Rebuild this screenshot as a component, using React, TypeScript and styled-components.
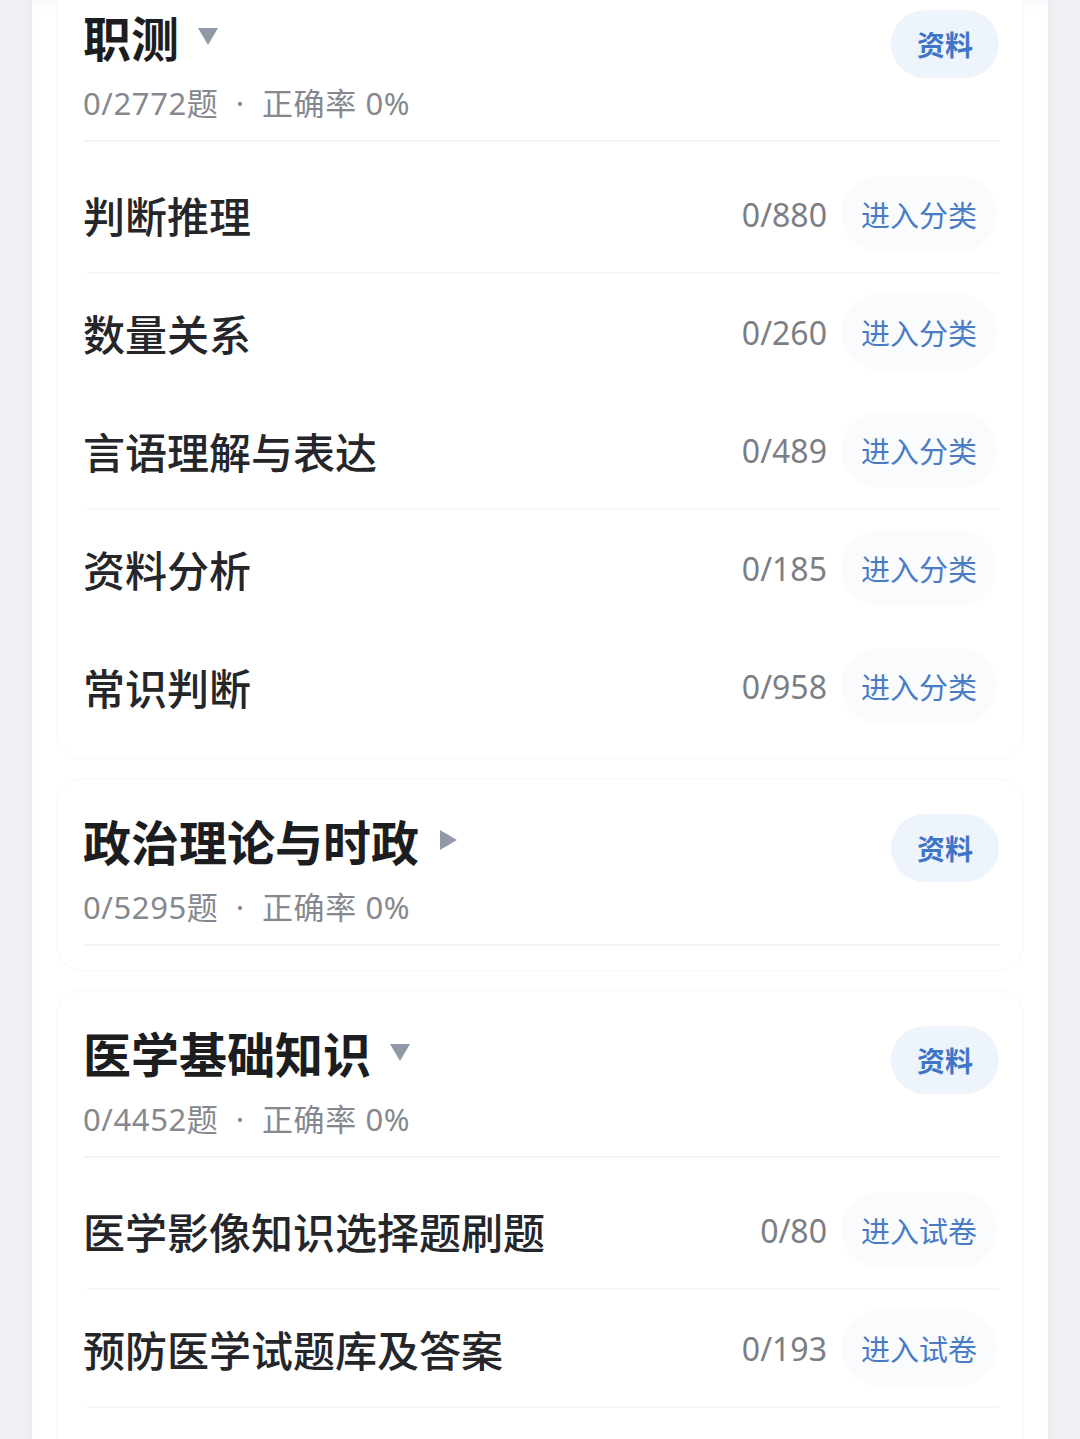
import React from "react"
import styled, { createGlobalStyle } from "styled-components"

const GlobalStyle = createGlobalStyle`
  html, body {
    margin: 0;
    padding: 0;
    background: #eff0f3;
  }
  body {
    font-family: "Noto Sans", "Noto Sans CJK SC", sans-serif;
    overflow: hidden;
  }
`

const Panel = styled.div`
  margin: -26px 32px 0;
  min-height: 1500px;
  background: #ffffff;
  padding: 0 24px 40px;
  display: flex;
  flex-direction: column;
  gap: 19px;
  box-shadow: 0 0 6px rgba(0, 0, 0, 0.04), inset 0 34px 10px -8px rgba(220, 228, 240, 0.5);
`

const Card = styled.section`
  border: 1px solid #f7f8fa;
  border-radius: 26px;
  padding: 0 24px 0 26px;
  background: #fff;
`

const Header = styled.div`
  display: flex;
  justify-content: space-between;
  align-items: flex-start;
  height: 167px;
  border-bottom: 2px solid #f3f4f6;
  box-sizing: border-box;
`

const HeaderText = styled.div`
  display: flex;
  flex-direction: column;
  padding-top: 31px;
`

const TitleRow = styled.div`
  display: flex;
  align-items: center;
  gap: 18px;
`

const Title = styled.h2`
  margin: 0;
  font-size: 48px;
  line-height: 60px;
  font-weight: 700;
  color: #1b1d21;
  font-family: "Noto Sans CJK SC", sans-serif;
`

const Arrow = styled.svg`
  width: 22px;
  height: 22px;
  flex: none;
`

const Stats = styled.div`
  margin-top: 17px;
  font-size: 31px;
  line-height: 40px;
  letter-spacing: 0.6px;
  color: #85888e;
  font-family: "Noto Sans", "Noto Sans CJK SC", sans-serif;
  white-space: pre;
`

const InfoButton = styled.button`
  margin-top: 35px;
  width: 108px;
  height: 68px;
  border: none;
  border-radius: 34px;
  background: #eef4fc;
  color: #3f75c6;
  font-size: 28px;
  font-weight: 700;
  font-family: "Noto Sans CJK SC", sans-serif;
  padding: 0;
`

const List = styled.div<{ $tail: number }>`
  padding-top: 14px;
  padding-bottom: ${(p) => p.$tail}px;
`

const Row = styled.div<{ $line: boolean }>`
  display: flex;
  align-items: center;
  height: 118px;
  box-sizing: border-box;
  border-bottom: 2px solid ${(p) => (p.$line ? "#f5f6f8" : "transparent")};
  margin-left: 4px;
`

const RowTitle = styled.div`
  flex: 1;
  margin-left: -4px;
  font-size: 42px;
  font-weight: 500;
  color: #24262a;
  font-family: "Noto Sans CJK SC", sans-serif;
`

const Count = styled.div`
  font-size: 32px;
  color: #7b7e84;
  font-family: "Noto Sans", sans-serif;
  margin-right: 14px;
`

const EnterButton = styled.button`
  height: 76px;
  padding: 0 20px;
  border: none;
  border-radius: 38px;
  background: #fafbfd;
  color: #4a7cc6;
  font-size: 29px;
  font-family: "Noto Sans CJK SC", sans-serif;
  margin-right: 2px;
`

type Item = { name: string; count: string; line?: boolean }

type Section = {
  title: string
  open: boolean
  stats: string
  action: string
  items: Item[]
  tail: number
}

const sections: Section[] = [
  {
    title: "职测",
    open: true,
    stats: "0/2772题  ·  正确率 0%",
    action: "进入分类",
    tail: 12,
    items: [
      { name: "判断推理", count: "0/880", line: true },
      { name: "数量关系", count: "0/260" },
      { name: "言语理解与表达", count: "0/489", line: true },
      { name: "资料分析", count: "0/185" },
      { name: "常识判断", count: "0/958" },
    ],
  },
  {
    title: "政治理论与时政",
    open: false,
    stats: "0/5295题  ·  正确率 0%",
    action: "进入分类",
    tail: 10,
    items: [],
  },
  {
    title: "医学基础知识",
    open: true,
    stats: "0/4452题  ·  正确率 0%",
    action: "进入试卷",
    tail: 60,
    items: [
      { name: "医学影像知识选择题刷题", count: "0/80", line: true },
      { name: "预防医学试题库及答案", count: "0/193", line: true },
    ],
  },
]

function Caret({ open }: { open: boolean }) {
  return (
    <Arrow viewBox="0 0 22 22">
      {open ? (
        <path d="M1 3 H21 L11 20 Z" fill="#9199a9" />
      ) : (
        <path d="M3 1 V21 L20 11 Z" fill="#9199a9" />
      )}
    </Arrow>
  )
}

export default function App() {
  return (
    <>
      <GlobalStyle />
      <Panel>
        {sections.map((s) => (
          <Card key={s.title}>
            <Header>
              <HeaderText>
                <TitleRow>
                  <Title>{s.title}</Title>
                  <Caret open={s.open} />
                </TitleRow>
                <Stats>{s.stats}</Stats>
              </HeaderText>
              <InfoButton>资料</InfoButton>
            </Header>
            <List $tail={s.tail}>
              {s.items.map((it) => (
                <Row key={it.name} $line={!!it.line}>
                  <RowTitle>{it.name}</RowTitle>
                  <Count>{it.count}</Count>
                  <EnterButton>{s.action}</EnterButton>
                </Row>
              ))}
            </List>
          </Card>
        ))}
      </Panel>
    </>
  )
}
